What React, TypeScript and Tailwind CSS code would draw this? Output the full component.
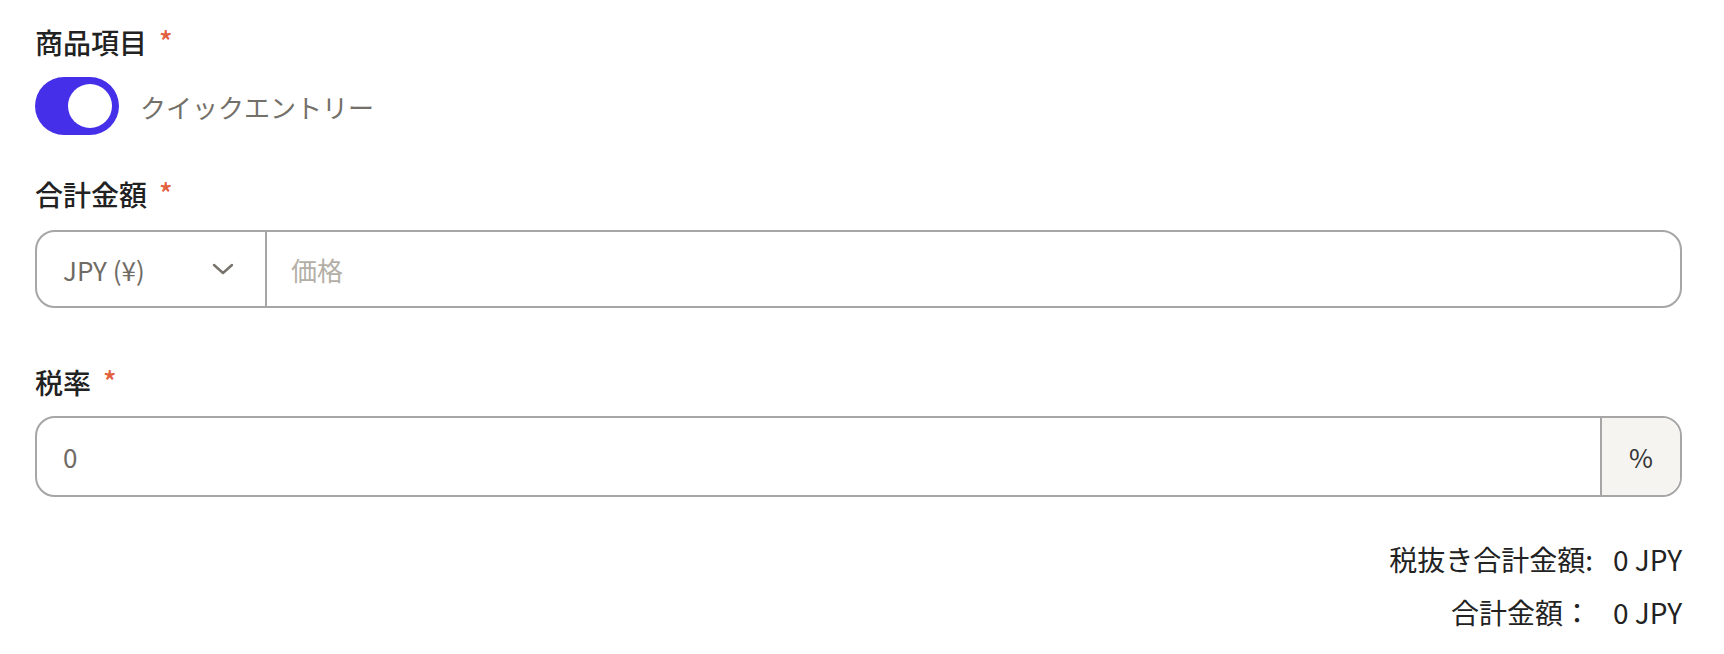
function Label({ text }: { text: string }) {
  return (
    <div className="flex h-[39px] items-center text-[28px] font-medium leading-[39px] text-[#222]">
      <span>{text}</span>
      <span className="ml-[12px] self-start -mt-[2px] text-[28px] leading-[39px] text-[#e3603f]">*</span>
    </div>
  );
}

function Toggle() {
  return (
    <div className="flex h-[58px] w-[84px] items-center justify-end rounded-full bg-[#452fe8] pr-[7px]">
      <div className="h-[44px] w-[44px] rounded-full bg-white" />
    </div>
  );
}

export default function App() {
  return (
    <div
      className="w-[1724px] bg-white pt-[23px] pl-[35px] pr-[42px]"
      style={{ fontFamily: '"Noto Sans CJK JP", "Noto Sans", sans-serif' }}
    >
      <Label text="商品項目" />
      <div className="mt-[15px] flex items-center gap-[21px]">
        <Toggle />
        <span className="text-[26px] text-[#737069]">クイックエントリー</span>
      </div>

      <div className="mt-[40px]">
        <Label text="合計金額" />
      </div>
      <div className="mt-[16px] flex h-[78px] overflow-hidden rounded-[20px] border-2 border-[#a6a6a6]">
        <div className="flex w-[230px] shrink-0 items-center justify-between border-r-2 border-[#a6a6a6] pl-[26px] pr-[31px] text-[26px] text-[#6f6b64]">
          <span>JPY (¥)</span>
          <svg width="22" height="12" viewBox="0 0 22 12" fill="none">
            <path d="M2 2l9 8 9-8" stroke="#77736b" strokeWidth="2.4" strokeLinecap="round" strokeLinejoin="round" />
          </svg>
        </div>
        <div className="flex flex-1 items-center pl-[24px] text-[26px] text-[#b3afa6]">価格</div>
      </div>

      <div className="mt-[55px]">
        <Label text="税率" />
      </div>
      <div className="mt-[14px] flex h-[81px] overflow-hidden rounded-[20px] border-2 border-[#a6a6a6]">
        <div className="flex flex-1 items-center pl-[26px] text-[26px] text-[#6f6b64]">0</div>
        <div className="flex w-[80px] items-center justify-center border-l-2 border-[#a6a6a6] bg-[#f5f4f0] text-[26px] text-[#333]">
          %
        </div>
      </div>

      <div className="mt-[44px] flex flex-col items-end gap-[17px] pb-[24px] text-[28px] leading-[36px] text-[#222]">
        <div className="flex">
          <span>税抜き合計金額:</span>
          <span className="ml-[20px]">0 JPY</span>
        </div>
        <div className="flex">
          <span>合計金額：</span>
          <span className="ml-[22px]">0 JPY</span>
        </div>
      </div>
    </div>
  );
}
